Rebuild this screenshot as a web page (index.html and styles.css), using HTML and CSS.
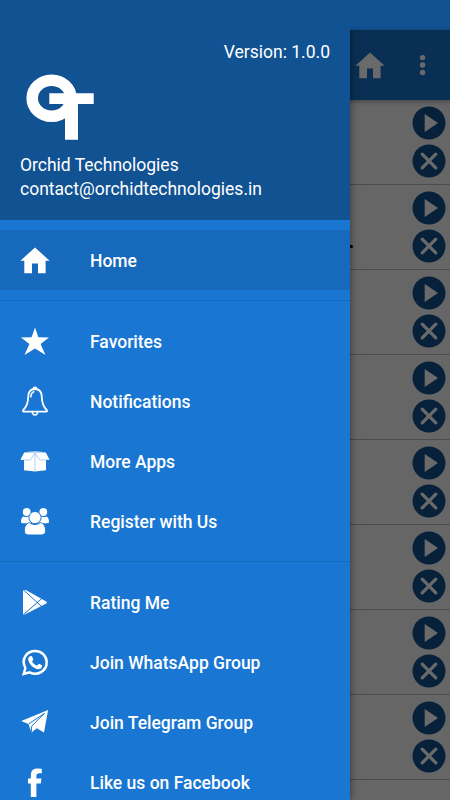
FILE: index.html
```html
<!DOCTYPE html>
<html lang="en">
<head>
<meta charset="utf-8">
<title>Orchid Technologies</title>
<link rel="stylesheet" href="styles.css">
</head>
<body>
<svg class="defs" aria-hidden="true">
  <symbol id="home" viewBox="0 0 30 30"><path d="M15 2.5 29.6 15.7H25.6V28.2H18V18.6H12V28.2H4.3V15.7H.4Z"/></symbol>
  <symbol id="play" viewBox="0 0 34 34"><circle class="disc" cx="17" cy="17" r="16.5"/><path d="M12.7 8V26L26 17Z"/></symbol>
  <symbol id="close" viewBox="0 0 34 34"><circle class="disc" cx="17" cy="17" r="16.5"/><path class="cross" d="M10.2 10.2 23.8 23.8M23.8 10.2 10.2 23.8"/></symbol>
</svg>
<div class="screen">
  <div class="page">
    <header class="toolbar">
      <svg class="icon"><use href="#home"/></svg>
      <svg class="more" viewBox="0 0 10 30"><circle cx="4.6" cy="7.6" r="2.7"/><circle cx="4.6" cy="15" r="2.7"/><circle cx="4.6" cy="22.5" r="2.7"/></svg>
    </header>
    <main class="list">
      <div class="entry"><svg><use href="#play"/></svg><svg><use href="#close"/></svg></div>
      <div class="entry clipped"><span class="dot"></span><svg><use href="#play"/></svg><svg><use href="#close"/></svg></div>
      <div class="entry"><svg><use href="#play"/></svg><svg><use href="#close"/></svg></div>
      <div class="entry"><svg><use href="#play"/></svg><svg><use href="#close"/></svg></div>
      <div class="entry"><svg><use href="#play"/></svg><svg><use href="#close"/></svg></div>
      <div class="entry"><svg><use href="#play"/></svg><svg><use href="#close"/></svg></div>
      <div class="entry"><svg><use href="#play"/></svg><svg><use href="#close"/></svg></div>
      <div class="entry"><svg><use href="#play"/></svg><svg><use href="#close"/></svg></div>
    </main>
  </div>
  <aside class="drawer">
    <div class="profile">
      <div class="version">Version: 1.0.0</div>
      <svg class="logo" viewBox="0 0 80 80"><ellipse cx="31.6" cy="33.2" rx="19.4" ry="18" fill="none" stroke="#fff" stroke-width="11.6"/><path d="M29.3 28.3H73.7V39H58V74.8H45V39H29.3Z"/><path d="M51 33H58V45H51Z"/></svg>
      <div class="name">Orchid Technologies</div>
      <div class="mail">contact@orchidtechnologies.in</div>
    </div>
    <nav class="group">
      <a class="item active"><svg class="icon"><use href="#home"/></svg><span>Home</span></a>
    </nav>
    <nav class="group ruled">
      <a class="item"><svg class="icon" viewBox="0 0 30 30"><path d="M15 1.4 18.4 11.3 29 11.4 20.6 17.9 25.5 29 15 22.4 4.5 29 9.4 17.9 1 11.4 11.6 11.3Z"/></svg><span>Favorites</span></a>
      <a class="item"><svg class="icon" viewBox="0 0 30 30"><g fill="none" stroke="#fff" stroke-linecap="round" stroke-linejoin="round"><path stroke-width="1.8" d="M15 3C10.5 3 8.3 6.3 8.2 11 8.1 17 7 20.3 3.3 24Q2.3 25.6 4 25.7H26Q27.7 25.6 26.7 24C23 20.3 21.9 17 21.8 11 21.7 6.3 19.5 3 15 3Z"/><path stroke-width="1.5" d="M10.8 11C11 8 12 6.4 14 5.7M13.3 2.8C13.3.8 16.7.8 16.7 2.8M12.4 26.5C12.6 29.7 17.4 29.7 17.6 26.5"/></g></svg><span>Notifications</span></a>
      <a class="item"><svg class="icon" viewBox="0 0 30 30"><path d="M4 12H26V24.3L15 25.6 4 24.3Z"/><path d="M4.2 6.6Q10 5.2 15 5.4 20 5.2 25.8 6.6L29.6 13.8 20 14.2 15 8 10 14.2 .4 13.8Z"/><path d="M10 13 15 7 20 13Z"/><path class="seam" d="M15 6.8V25.4M15 7.2 10.3 14H4M15 7.2 19.7 14H26M5 6.8Q15 5.6 25 6.8"/></svg><span>More Apps</span></a>
      <a class="item"><svg class="icon" viewBox="0 0 30 30"><circle cx="6.7" cy="6" r="3.9"/><circle cx="23.3" cy="6" r="3.9"/><path d="M3.4 10.4Q1 11.5 1 16 1 17.2 3 17.2H27Q29 17.2 29 16 29 11.5 26.6 10.4Q23 12 20.5 10H9.5Q7 12 3.4 10.4Z"/><path class="cut" d="M4.3 25C4.3 19.5 7 17 9.5 16.6Q15 20.5 20.5 16.6C23 17 25.7 19.5 25.7 25Q25.7 29 22 29H8Q4.3 29 4.3 25Z"/><circle class="cut" cx="15" cy="11.6" r="6.1"/></svg><span>Register with Us</span></a>
    </nav>
    <nav class="group ruled">
      <a class="item"><svg class="icon" viewBox="0 0 30 30"><path d="M4.2 2.9Q3 3 3 4.5V26Q3 27.8 4.3 27.8L25.8 16.8Q27.8 15.4 25.8 14.2L5.8 3.1Z"/><path class="gap" d="M3.8 3.2 21.5 19.4M4 27.2 21.8 11.5"/></svg><span>Rating Me</span></a>
      <a class="item"><svg class="icon" viewBox="0 0 30 30"><path fill="none" stroke="#fff" stroke-width="2.5" d="M3.7 27 5.4 21C.7 12.5 6.3 4 15.3 4 21.8 4 26.7 9 26.7 15.3 26.7 24.2 17.5 29.2 9.6 25.4Z"/><path d="M11.2 9.1Q12 9.1 12.3 9.9L13.2 12.1Q13.4 12.7 13 13.2L12 14.4Q13.9 17.5 17 18.7L18.4 17.2Q18.8 16.7 19.4 17L21.7 18.1Q22.4 18.5 22.2 19.2 21.6 22 18.3 22.2C13.5 21.7 8.4 16.3 8.2 12.4 8.2 10.5 9.4 9.1 11.2 9.1Z"/></svg><span>Join WhatsApp Group</span></a>
      <a class="item"><svg class="icon" viewBox="0 0 30 30"><path d="M1.2 14 28.1 3 24 25.4 16.8 21.2 11.5 25.4 8.4 17Z"/><path class="gap" d="M8.6 17 24.5 6.3 11.7 19.2 11.2 25.2"/></svg><span>Join Telegram Group</span></a>
      <a class="item"><svg class="icon" viewBox="0 0 30 30"><path d="M10.8 30V16.4H8V11.5H10.8V8.4C10.8 4 13 1.4 17.5 1.4Q20 1.4 21.8 1.8V6.2H19.2Q16.4 6.2 16.4 8.8V11.5H21.4L20.8 16.4H16.4V30Z"/></svg><span>Like us on Facebook</span></a>
    </nav>
  </aside>
</div>
</body>
</html>
```
FILE: styles.css
```css
* { box-sizing: border-box; }
body { margin: 0; font-family: Roboto, sans-serif; color: #fff; }
svg { display: block; fill: currentColor; }
.defs { position: absolute; width: 0; height: 0; }

.screen { position: relative; width: 450px; height: 800px; overflow: hidden; background: #666; }
.page { border-top: 30px solid #115293; color: #6a6a6a; }
.toolbar {
  position: relative;
  display: flex;
  align-items: center;
  justify-content: flex-end;
  gap: 33px;
  height: 70px;
  padding-right: 22px;
  background: #0a2f54;
  box-shadow: 0 1px 5px rgba(0, 0, 0, .4);
}
.more { width: 10px; height: 30px; }

.entry {
  display: flex;
  flex-direction: column;
  align-items: flex-end;
  gap: 3.5px;
  height: 85px;
  padding: 6px 4px 0 0;
  border-bottom: 1px solid #4c4c4c;
}
.entry svg { width: 34px; height: 34px; }
.disc { fill: #07213b; }
.cross { fill: none; stroke: currentColor; stroke-width: 3.3; stroke-linecap: round; }
.clipped { position: relative; }
.dot { position: absolute; left: 350px; top: 60px; width: 3px; height: 3px; border-radius: 0 2px 2px 0; background: #000; }

/* The clip keeps the drawer's shadow off the status bar. */
.drawer {
  position: absolute;
  inset: 0 auto 0 0;
  width: 350px;
  background: #1976d2;
  box-shadow: 0 0 8px rgba(0, 0, 0, .5);
  clip-path: polygon(0 0, 100% 0, 100% 30px, calc(100% + 20px) 30px, calc(100% + 20px) 100%, 0 100%);
}
.profile { height: 220px; padding: 40px 20px 0; background: #115293; font-size: 17.5px; line-height: 24px; }
.version { text-align: right; }
.logo { width: 80px; height: 80px; margin-top: 1px; }
.name { margin-top: 8px; }

.group { padding: 10px 0; }
.ruled { border-top: 1px solid #166abd; }
.item { display: flex; align-items: center; gap: 40px; height: 60px; padding-left: 20px; font-size: 17.5px; font-weight: 500; }
.item span { padding-top: 2px; }
.active { background: #1669bb; }
.icon { width: 30px; height: 30px; flex: none; }
.seam { fill: none; stroke: #8fbfee; stroke-width: .7; }
.cut { stroke: #1976d2; stroke-width: 1; }
.gap { fill: none; stroke: #1976d2; stroke-width: 1; }
```
